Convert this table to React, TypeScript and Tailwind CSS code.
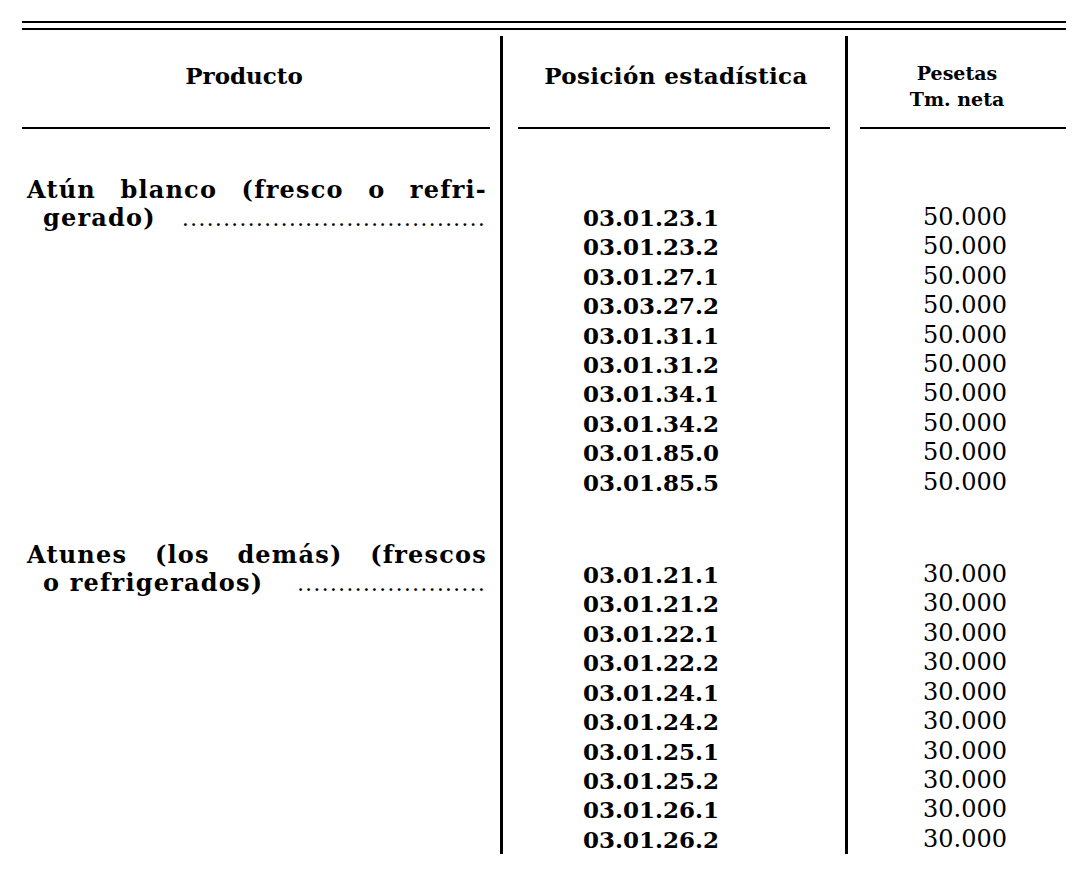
const groups = [
  {
    first: ["Atún", "blanco", "(fresco", "o", "refri-"],
    second: "gerado)",
    dots: 37,
    price: "50.000",
    codes: [
      "03.01.23.1",
      "03.01.23.2",
      "03.01.27.1",
      "03.03.27.2",
      "03.01.31.1",
      "03.01.31.2",
      "03.01.34.1",
      "03.01.34.2",
      "03.01.85.0",
      "03.01.85.5",
    ],
  },
  {
    first: ["Atunes", "(los", "demás)", "(frescos"],
    second: "o refrigerados)",
    dots: 23,
    price: "30.000",
    codes: [
      "03.01.21.1",
      "03.01.21.2",
      "03.01.22.1",
      "03.01.22.2",
      "03.01.24.1",
      "03.01.24.2",
      "03.01.25.1",
      "03.01.25.2",
      "03.01.26.1",
      "03.01.26.2",
    ],
  },
];

function Product({
  first,
  second,
  dots,
}: {
  first: string[];
  second: string;
  dots: number;
}) {
  return (
    <div className="text-[24px] font-bold leading-[28px] tracking-[1.2px]">
      <div className="flex justify-between">
        {first.map((word) => (
          <span key={word}>{word}</span>
        ))}
      </div>
      <div className="flex items-baseline pl-[16px]">
        <span className="whitespace-nowrap">{second}</span>
        <span className="ml-[24px] flex-1 whitespace-nowrap text-right text-[15px] font-bold tracking-[3px]">
          {".".repeat(dots)}
        </span>
      </div>
    </div>
  );
}

export default function App() {
  return (
    <div className="min-h-[882px] bg-white pt-[21px] pl-[22px] text-black [font-family:'DejaVu_Serif',serif]">
      <div className="w-[1044px]">
        <div className="h-[2px] bg-black" />
        <div className="mt-[5px] h-[2px] bg-black" />

        <div className="mt-[6px] grid grid-cols-[478px_345px_221px]">
          {/* Producto */}
          <div className="flex flex-col">
            <div className="h-[91px] pt-[27px] pr-[34px] text-center text-[23px] font-bold leading-[26px]">
              Producto
            </div>
            <div className="mr-[10px] h-[2px] bg-black" />
            <div className="pt-[47px] pr-[13px] pl-[5px]">
              <Product {...groups[0]} />
              <div className="mt-[306px]">
                <Product {...groups[1]} />
              </div>
            </div>
          </div>

          {/* Posición estadística */}
          <div className="flex flex-col border-l-[3px] border-black">
            <div className="h-[91px] pt-[27px] pl-[4px] text-center text-[23px] font-bold leading-[26px] tracking-[0.4px]">
              Posición estadística
            </div>
            <div className="mx-[15px] h-[2px] bg-black" />
            <div className="pt-[74px] pr-[46px] text-center text-[23px] font-bold leading-[29.4px]">
              {groups.map((g, i) => (
                <div key={g.price} className={i > 0 ? "mt-[63px]" : ""}>
                  {g.codes.map((code) => (
                    <div key={code}>{code}</div>
                  ))}
                </div>
              ))}
            </div>
          </div>

          {/* Pesetas Tm. neta */}
          <div className="flex flex-col border-l-[3px] border-black">
            <div className="h-[91px] pt-[24px] text-center text-[19px] font-bold leading-[26px]">
              <div>Pesetas</div>
              <div>Tm. neta</div>
            </div>
            <div className="ml-[12px] h-[2px] bg-black" />
            <div className="pt-[74px] pl-[16px] text-center text-[24px] leading-[29.4px]">
              {groups.map((g, i) => (
                <div key={g.price} className={i > 0 ? "mt-[63px]" : ""}>
                  {g.codes.map((code) => (
                    <div key={code}>{g.price}</div>
                  ))}
                </div>
              ))}
            </div>
          </div>
        </div>
      </div>
    </div>
  );
}
